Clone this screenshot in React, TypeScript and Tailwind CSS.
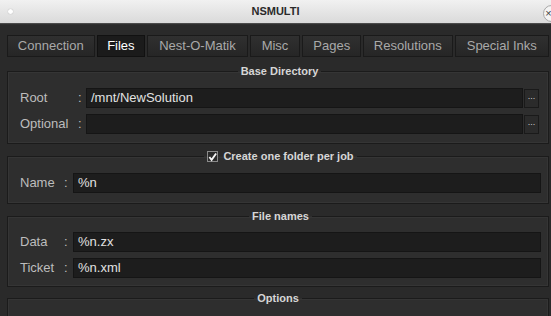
import { ReactNode } from "react";

const tabs = [
  { name: "Connection", w: "w-[88px]" },
  { name: "Files", w: "w-[49px]" },
  { name: "Nest-O-Matik", w: "w-[101px]" },
  { name: "Misc", w: "w-[51px]" },
  { name: "Pages", w: "w-[59px]" },
  { name: "Resolutions", w: "w-[90px]" },
  { name: "Special Inks", w: "w-[95px]" },
];

function Group({ legend, className, children }: { legend: ReactNode; className: string; children?: ReactNode }) {
  return (
    <fieldset className={`border border-[#1b1b1b] bg-[#2e2e2e] shadow-[inset_0_0_0_1px_#353535] ${className}`}>
      <legend className="mx-auto px-[3px] text-[11px] font-bold leading-[13px] text-[#d6d6d6]">{legend}</legend>
      {children}
    </fieldset>
  );
}

function Row({ label, value, labelW, colonW, browse }: { label: string; value: string; labelW: string; colonW: string; browse?: boolean }) {
  return (
    <div className="flex h-5 items-center">
      <span className={`${labelW} text-[13px] text-[#bdbdbd]`}>{label}</span>
      <span className={`${colonW} text-[13px] text-[#bdbdbd]`}>:</span>
      <div className="flex h-5 flex-1 items-center border border-[#151515] bg-[#1d1d1d] pl-[4px] text-[13px] text-[#e2e2e2]">
        {value}
      </div>
      {browse && (
        <div className="ml-px flex h-[19px] w-[15px] items-center justify-center border border-[#1a1a1a] bg-[#2b2b2b] pb-[3px] text-[9px] leading-none text-[#cfcfcf]">
          ...
        </div>
      )}
    </div>
  );
}

export default function App() {
  return (
    <div className="h-[316px] w-[551px] overflow-hidden bg-[#2a2a2a] font-['Liberation_Sans',Arial,sans-serif]">
      {/* title bar */}
      <div className="grid h-[23px] grid-cols-[1fr_auto_1fr] items-center bg-gradient-to-b from-[#f1f1f1] to-[#dadada]">
        <div className="pl-[8px]">
          <div className="h-[5px] w-[5px] rounded-full bg-white shadow-[0_0_1px_#999]" />
        </div>
        <div className="text-[11px] font-bold text-[#2a2a2a]">NSMULTI</div>
        <div className="flex justify-end">
          <div className="mr-[-9px] mt-[3px] flex h-[17px] w-[17px] items-center justify-center rounded-full border border-[#a8a8a8] bg-[#f4f4f4] pr-[6px] text-[11px] leading-none text-[#444]">
            ×
          </div>
        </div>
      </div>
      <div className="h-[2px] bg-gradient-to-b from-[#5a5a5a] to-[#222]" />

      <div className="pl-[7px] pr-[2px]">
        {/* tabs */}
        <div className="mt-[10px] flex gap-[2px]">
          {tabs.map(t => (
            <div
              key={t.name}
              className={`flex h-[22px] items-center justify-center border text-[13px] ${t.w} ${
                t.name === "Files"
                  ? "border-[#111] bg-[#1b1b1b] text-white"
                  : "border-[#1a1a1a] bg-gradient-to-b from-[#303030] to-[#262626] text-[#a9a9a9]"
              }`}
            >
              {t.name}
            </div>
          ))}
        </div>

        <Group legend="Base Directory" className="mt-[8px] pb-[9px] pl-3 pr-[9px] pt-[10px]">
          <div className="flex flex-col gap-[6px]">
            <Row label="Root" value="/mnt/NewSolution" labelW="w-[58px]" colonW="w-[8px]" browse />
            <Row label="Optional" value="" labelW="w-[58px]" colonW="w-[8px]" browse />
          </div>
        </Group>

        <Group
          className="mt-[6px] pb-[10px] pl-3 pr-[7px] pt-[10px]"
          legend={
            <span className="flex items-center gap-[5px]">
              <span className="flex h-[11px] w-[11px] items-center justify-center border border-[#8a8a8a] bg-[#2a2a2a]">
                <svg width="10" height="10" viewBox="0 0 10 10">
                  <path d="M1.5 5 L4 8.2 L9 1" fill="none" stroke="#f4f4f4" strokeWidth="2" />
                </svg>
              </span>
              Create one folder per job
            </span>
          }
        >
          <Row label="Name" value="%n" labelW="w-[44px]" colonW="w-[9px]" />
        </Group>

        <Group legend="File names" className="mt-[6px] pb-[8px] pl-3 pr-[7px] pt-[9px]">
          <div className="flex flex-col gap-[6px]">
            <Row label="Data" value="%n.zx" labelW="w-[44px]" colonW="w-[9px]" />
            <Row label="Ticket" value="%n.xml" labelW="w-[44px]" colonW="w-[9px]" />
          </div>
        </Group>

        <Group legend="Options" className="mt-[5px] h-[60px]" />
      </div>
    </div>
  );
}
